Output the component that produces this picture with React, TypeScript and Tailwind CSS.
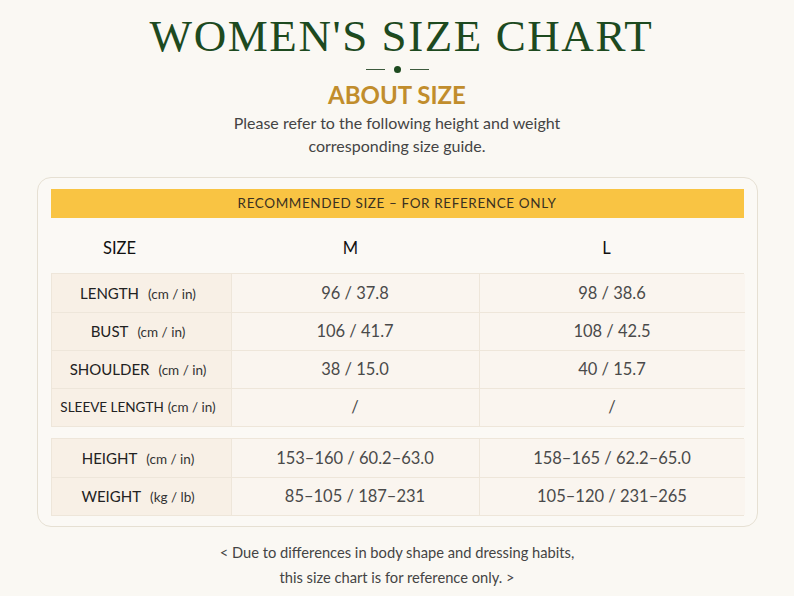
import React from "react";

const rows1 = [
  { label: "LENGTH", unit: "(cm / in)", m: "96 / 37.8", l: "98 / 38.6", small: false },
  { label: "BUST", unit: "(cm / in)", m: "106 / 41.7", l: "108 / 42.5", small: false },
  { label: "SHOULDER", unit: "(cm / in)", m: "38 / 15.0", l: "40 / 15.7", small: false },
  { label: "SLEEVE LENGTH", unit: "(cm / in)", m: "/", l: "/", small: true },
];
const rows2 = [
  { label: "HEIGHT", unit: "(cm / in)", m: "153–160 / 60.2–63.0", l: "158–165 / 62.2–65.0", small: false },
  { label: "WEIGHT", unit: "(kg / lb)", m: "85–105 / 187–231", l: "105–120 / 231–265", small: false },
];

type Row = { label: string; unit: string; m: string; l: string; small: boolean };

function Table({ rows }: { rows: Row[] }) {
  return (
    <div className="grid grid-cols-[180px_248px_265px] border border-[#eee6da]">
      {rows.map((r, i) => (
        <React.Fragment key={r.label}>
          <div
            className={`h-[38px] flex items-center justify-center pr-[6px] bg-[#f8f0e6] border-r border-[#eee6da] text-[#222] ${
              i > 0 ? "border-t" : ""
            }`}
          >
            <span className={r.small ? "text-[13.5px]" : "text-[15px]"}>
              {r.label}
              <span className={`${r.small ? "text-[13.5px] ml-[4px]" : "text-[13.5px] ml-[9px]"} text-[#333]`}>{r.unit}</span>
            </span>
          </div>
          <div
            className={`h-[38px] flex items-center justify-center bg-[#faf5ef] border-r border-[#eee6da] text-[16.5px] text-[#4a4a4a] ${
              i > 0 ? "border-t" : ""
            }`}
          >
            {r.m}
          </div>
          <div
            className={`h-[38px] flex items-center justify-center bg-[#faf5ef] border-[#eee6da] text-[16.5px] text-[#4a4a4a] ${
              i > 0 ? "border-t" : ""
            }`}
          >
            {r.l}
          </div>
        </React.Fragment>
      ))}
    </div>
  );
}

export default function App() {
  return (
    <div
      className="w-[794px] h-[596px] bg-[#faf8f3] flex flex-col items-center overflow-hidden"
      style={{ fontFamily: "Lato, 'Noto Sans', sans-serif" }}
    >
      <h1
        className="mt-[13px] pl-[9px] text-[45px] leading-[46px] tracking-[0.035em] text-[#1d4a1f]"
        style={{ fontFamily: "'Liberation Serif', serif" }}
      >
        WOMEN'S SIZE CHART
      </h1>
      <div className="mt-[7px] flex items-center gap-[9px]">
        <div className="w-[19px] h-px bg-[#3c5a3c]" />
        <div className="w-[7px] h-[7px] rounded-full bg-[#1d4a1f]" />
        <div className="w-[19px] h-px bg-[#3c5a3c]" />
      </div>
      <div className="mt-[7px] text-[24px] leading-[30px] font-bold text-[#c18d2c]">ABOUT SIZE</div>
      <p className="mt-[1px] text-[16px] leading-[23px] text-[#444] text-center">
        Please refer to the following height and weight
        <br />
        corresponding size guide.
      </p>
      <div className="mt-[20px] w-[721px] h-[350px] rounded-[14px] border border-[#e6e0d3] bg-[#fbf9f5] px-[13px] pt-[11px]">
        <div className="h-[29px] bg-[#f9c443] flex items-center justify-center text-[13.5px] tracking-[0.045em] text-[#3a3121]">
          RECOMMENDED SIZE – FOR REFERENCE ONLY
        </div>
        <div className="grid grid-cols-[138px_324px_188px] h-[55px] pt-[5px] items-center text-[16.5px] text-[#111]">
          <div className="text-center">SIZE</div>
          <div className="text-center">M</div>
          <div className="text-center">L</div>
        </div>
        <Table rows={rows1} />
        <div className="h-[11px]" />
        <Table rows={rows2} />
      </div>
      <p className="mt-[13px] text-[14.7px] leading-[25px] text-[#444] text-center">
        &lt; Due to differences in body shape and dressing habits,
        <br />
        this size chart is for reference only. &gt;
      </p>
    </div>
  );
}
